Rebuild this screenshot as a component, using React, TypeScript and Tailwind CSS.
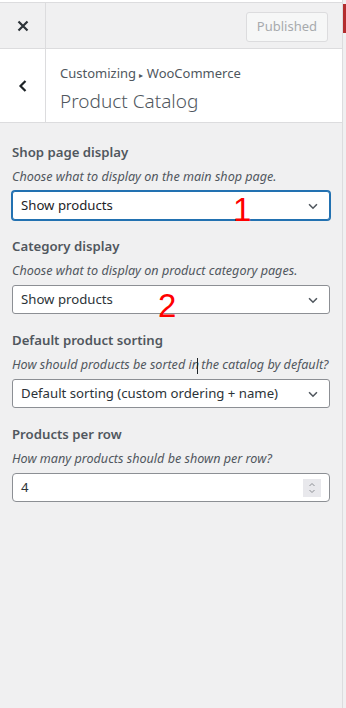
import React from "react";

const font = { fontFamily: '"Noto Sans", "Open Sans", sans-serif' };

const Chevron: React.FC = () => (
  <svg width="14" height="14" viewBox="0 0 16 16" fill="none" className="text-[#50575e]">
    <path d="M3.5 6l4.5 4.5L12.5 6" stroke="currentColor" strokeWidth="1.8" />
  </svg>
);

interface SelectProps {
  value: string;
  focused?: boolean;
  marker?: React.ReactNode;
}

const SelectBox: React.FC<SelectProps> = ({ value, focused, marker }) => (
  <div
    className={`relative flex items-center justify-between h-[29px] rounded-[3px] bg-white pl-[8px] pr-[9px] text-[13.2px] ${
      focused ? "border border-[#2271b1] shadow-[0_0_0_1px_#2271b1] text-[#1d2327]" : "border border-[#8c8f94] text-[#2c3338]"
    }`}
  >
    <span>{value}</span>
    <Chevron />
    {marker}
  </div>
);

interface FieldProps {
  label: string;
  description: React.ReactNode;
  children: React.ReactNode;
}

const Field: React.FC<FieldProps> = ({ label, description, children }) => (
  <div className="mb-[16px]">
    <div className="text-[13.2px] font-semibold text-[#50575e] leading-[20px] mb-[5px]">{label}</div>
    <div className="text-[12.6px] italic text-[#50575e] leading-[20px] mb-[4px] whitespace-nowrap">{description}</div>
    {children}
  </div>
);

const Marker: React.FC<{ n: string; className: string }> = ({ n, className }) => (
  <span className={`absolute text-[33px] leading-none text-[#ff0000] ${className}`} style={{ fontFamily: '"Liberation Sans", sans-serif' }}>
    {n}
  </span>
);

export default function App() {
  return (
    <div className="flex w-[346px] h-[708px] bg-[#f0f0f1]" style={font}>
      <div className="w-[343px] h-full border-r border-[#dcdcde] flex flex-col">
        <div className="h-[3px] bg-white border-b border-[#dcdcde]" />
        <div className="flex h-[46px] border-b border-[#dcdcde]">
          <div className="w-[46px] border-r border-[#dcdcde] flex items-center justify-center">
            <svg width="14" height="14" viewBox="0 0 14 14">
              <path d="M2.5 2.5l9 9M11.5 2.5l-9 9" stroke="#2c3338" strokeWidth="2.2" />
            </svg>
          </div>
          <div className="flex-1 flex items-center justify-end pr-[14px] pt-[2px]">
            <div className="h-[30px] px-[10px] flex items-center rounded-[3px] border border-[#dcdcde] bg-[#f6f7f7] text-[13px] text-[#a7aaad]">
              Published
            </div>
          </div>
        </div>
        <div className="flex h-[74px] bg-white border-b border-[#dcdcde]">
          <div className="w-[46px] border-r border-[#dcdcde] flex items-center justify-center">
            <svg width="12" height="16" viewBox="0 0 12 16">
              <path d="M8.5 3L3.5 8l5 5" stroke="#1d2327" strokeWidth="2.2" fill="none" />
            </svg>
          </div>
          <div className="pl-[14px] pt-[14px]">
            <div className="text-[13px] text-[#50575e] leading-[20px]">
              Customizing <span className="text-[8px] align-middle">▸</span> WooCommerce
            </div>
            <div className="text-[19px] font-light text-[#50575e] leading-[28px] mt-[2px]">Product Catalog</div>
          </div>
        </div>
        <div className="px-[12px] pt-[19px]">
          <Field label="Shop page display" description="Choose what to display on the main shop page.">
            <SelectBox value="Show products" focused marker={<Marker n="1" className="left-[220px] top-[1px]" />} />
          </Field>
          <Field label="Category display" description="Choose what to display on product category pages.">
            <SelectBox value="Show products" marker={<Marker n="2" className="left-[145px] top-[3px]" />} />
          </Field>
          <Field
            label="Default product sorting"
            description={
              <>
                How should products be sorted in
                <span className="inline-block w-px h-[16px] bg-[#1d2327] align-middle -ml-[2px]" />
                {" "}the catalog by default?
              </>
            }
          >
            <SelectBox value="Default sorting (custom ordering + name)" />
          </Field>
          <Field label="Products per row" description="How many products should be shown per row?">
            <div className="flex items-center justify-between h-[29px] rounded-[4px] border border-[#8c8f94] bg-white pl-[8px] pr-[8px] text-[13.2px] text-[#2c3338]">
              <span>4</span>
              <div className="w-[18px] h-[18px] bg-[#e8e8ec] flex items-center justify-center">
                <svg width="10" height="14" viewBox="0 0 10 14">
                  <path d="M2.5 5L5 2.5 7.5 5M2.5 9L5 11.5 7.5 9" stroke="#8c8f94" strokeWidth="1" fill="none" />
                </svg>
              </div>
            </div>
          </Field>
        </div>
      </div>
      <div className="flex-1 flex flex-col">
        <div className="h-[29px] mt-[4px] bg-[#b32d2e]" />
      </div>
    </div>
  );
}
